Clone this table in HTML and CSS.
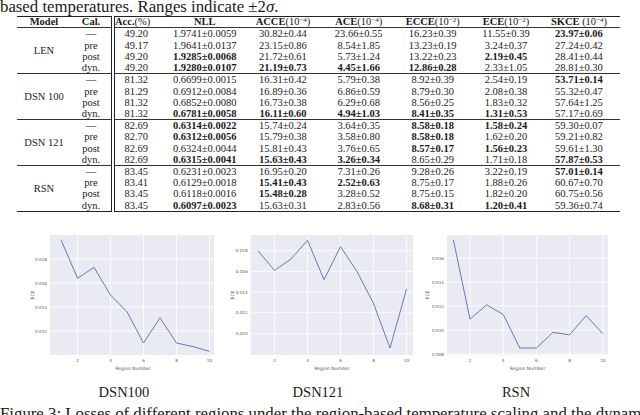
FILE: index.html
```html
<!DOCTYPE html>
<html>
<head>
<meta charset="utf-8">
<link rel="stylesheet" href="styles.css">
</head>
<body>
<p class="title">based temperatures. Ranges indicate ±2<i>σ</i>.</p>
<table class="res">
<colgroup>
<col class="c-model"><col class="c-cal"><col class="c-acc"><col class="c-nll"><col class="c-acce"><col class="c-ace"><col class="c-ecce"><col class="c-ece"><col class="c-skce">
</colgroup>
<thead>
<tr><th>Model</th><th class="cal">Cal.</th><th>Acc.<span class="reg">(%)</span></th><th>NLL</th><th>ACCE<span class="reg">(10<sup>−4</sup>)</span></th><th>ACE<span class="reg">(10<sup>−4</sup>)</span></th><th>ECCE<span class="reg">(10<sup>−2</sup>)</span></th><th>ECE<span class="reg">(10<sup>−2</sup>)</span></th><th>SKCE <span class="reg">(10<sup>−4</sup>)</span></th></tr>
</thead>
<tbody>
<tr><td rowspan="4">LEN</td><td class="cal">—</td><td>49.20</td><td>1.9741±0.0059</td><td>30.82±0.44</td><td>23.66±0.55</td><td>16.23±0.39</td><td>11.55±0.39</td><td><b>23.97±0.06</b></td></tr>
<tr><td class="cal">pre</td><td>49.17</td><td>1.9641±0.0137</td><td>23.15±0.86</td><td>8.54±1.85</td><td>13.23±0.19</td><td>3.24±0.37</td><td>27.24±0.42</td></tr>
<tr><td class="cal">post</td><td>49.20</td><td><b>1.9285±0.0068</b></td><td>21.72±0.61</td><td>5.73±1.24</td><td>13.22±0.23</td><td><b>2.19±0.45</b></td><td>28.41±0.44</td></tr>
<tr><td class="cal">dyn.</td><td>49.20</td><td><b>1.9280±0.0107</b></td><td><b>21.19±0.73</b></td><td><b>4.45±1.66</b></td><td><b>12.86±0.28</b></td><td>2.33±1.05</td><td>28.81±0.30</td></tr>
</tbody>
<tbody>
<tr><td rowspan="4">DSN 100</td><td class="cal">—</td><td>81.32</td><td>0.6699±0.0015</td><td>16.31±0.42</td><td>5.79±0.38</td><td>8.92±0.39</td><td>2.54±0.19</td><td><b>53.71±0.14</b></td></tr>
<tr><td class="cal">pre</td><td>81.29</td><td>0.6912±0.0084</td><td>16.89±0.36</td><td>6.86±0.59</td><td>8.79±0.30</td><td>2.08±0.38</td><td>55.32±0.47</td></tr>
<tr><td class="cal">post</td><td>81.32</td><td>0.6852±0.0080</td><td>16.73±0.38</td><td>6.29±0.68</td><td>8.56±0.25</td><td>1.83±0.32</td><td>57.64±1.25</td></tr>
<tr><td class="cal">dyn.</td><td>81.32</td><td><b>0.6781±0.0058</b></td><td><b>16.11±0.60</b></td><td><b>4.94±1.03</b></td><td><b>8.41±0.35</b></td><td><b>1.31±0.53</b></td><td>57.17±0.69</td></tr>
</tbody>
<tbody>
<tr><td rowspan="4">DSN 121</td><td class="cal">—</td><td>82.69</td><td><b>0.6314±0.0022</b></td><td>15.74±0.24</td><td>3.64±0.35</td><td><b>8.58±0.18</b></td><td><b>1.58±0.24</b></td><td>59.30±0.07</td></tr>
<tr><td class="cal">pre</td><td>82.70</td><td><b>0.6312±0.0056</b></td><td>15.79±0.38</td><td>3.58±0.80</td><td><b>8.58±0.18</b></td><td>1.62±0.20</td><td>59.21±0.82</td></tr>
<tr><td class="cal">post</td><td>82.69</td><td>0.6324±0.0044</td><td>15.81±0.43</td><td>3.76±0.65</td><td><b>8.57±0.17</b></td><td><b>1.56±0.23</b></td><td>59.61±1.30</td></tr>
<tr><td class="cal">dyn.</td><td>82.69</td><td><b>0.6315±0.0041</b></td><td><b>15.63±0.43</b></td><td><b>3.26±0.34</b></td><td>8.65±0.29</td><td>1.71±0.18</td><td><b>57.87±0.53</b></td></tr>
</tbody>
<tbody>
<tr><td rowspan="4">RSN</td><td class="cal">—</td><td>83.45</td><td>0.6231±0.0023</td><td>16.95±0.20</td><td>7.31±0.26</td><td>9.28±0.26</td><td>3.22±0.19</td><td><b>57.01±0.14</b></td></tr>
<tr><td class="cal">pre</td><td>83.41</td><td>0.6129±0.0018</td><td><b>15.41±0.43</b></td><td><b>2.52±0.63</b></td><td>8.75±0.17</td><td>1.88±0.26</td><td>60.67±0.70</td></tr>
<tr><td class="cal">post</td><td>83.45</td><td>0.6118±0.0016</td><td><b>15.48±0.28</b></td><td>3.28±0.52</td><td>8.75±0.15</td><td>1.82±0.20</td><td>60.75±0.56</td></tr>
<tr><td class="cal">dyn.</td><td>83.45</td><td><b>0.6097±0.0023</b></td><td>15.63±0.31</td><td>2.83±0.56</td><td><b>8.68±0.31</b></td><td><b>1.20±0.41</b></td><td>59.36±0.74</td></tr>
</tbody>
</table>

<div class="figs">
  <div class="fig">
    <svg class="plot" width="200" height="150" viewBox="0 0 200 150">
      <rect class="bg" x="36" y="10" width="166" height="120"/>
      <g class="grid">
        <line x1="63.5" y1="10" x2="63.5" y2="130"/><line x1="96.5" y1="10" x2="96.5" y2="130"/><line x1="129.5" y1="10" x2="129.5" y2="130"/><line x1="162.5" y1="10" x2="162.5" y2="130"/><line x1="195.5" y1="10" x2="195.5" y2="130"/>
        <line x1="36" y1="34" x2="202" y2="34"/><line x1="36" y1="58" x2="202" y2="58"/><line x1="36" y1="82" x2="202" y2="82"/><line x1="36" y1="106" x2="202" y2="106"/>
      </g>
      <polyline class="ln" points="47,14.8 63.5,53.2 80,42.4 96.5,70 113,86.8 129.5,118 146,92.8 162.5,118 179,121.6 195.5,126.4"/>
      <g class="yt"><text x="33" y="35.5">0.018</text><text x="33" y="59.5">0.016</text><text x="33" y="83.5">0.014</text><text x="33" y="107.5">0.012</text></g>
      <g class="xt"><text x="63.5" y="137">2</text><text x="96.5" y="137">4</text><text x="129.5" y="137">6</text><text x="162.5" y="137">8</text><text x="195.5" y="137">10</text></g>
      <text class="xl" x="119" y="144.5">Region Number</text>
      <text class="yl" transform="translate(19.5 70) rotate(-90)">ECE</text>
    </svg>
    <div class="sub sub1">DSN100</div>
  </div>
  <div class="fig">
    <svg class="plot" width="200" height="150" viewBox="0 0 200 150">
      <rect class="bg" x="36.7" y="10" width="162.3" height="120"/>
      <g class="grid">
        <line x1="60.5" y1="10" x2="60.5" y2="130"/><line x1="93.5" y1="10" x2="93.5" y2="130"/><line x1="126.5" y1="10" x2="126.5" y2="130"/><line x1="159.5" y1="10" x2="159.5" y2="130"/><line x1="192.5" y1="10" x2="192.5" y2="130"/>
        <line x1="36.7" y1="25.7" x2="199" y2="25.7"/><line x1="36.7" y1="46.4" x2="199" y2="46.4"/><line x1="36.7" y1="67.1" x2="199" y2="67.1"/><line x1="36.7" y1="87.8" x2="199" y2="87.8"/><line x1="36.7" y1="108.5" x2="199" y2="108.5"/>
      </g>
      <polyline class="ln" points="44,25.7 60.5,45.4 77,34 93.5,15.35 110,54.7 126.5,21.6 143,46.4 159.5,78.5 176,123 192.5,64"/>
      <g class="yt"><text x="33.7" y="27.2">0.018</text><text x="33.7" y="47.9">0.016</text><text x="33.7" y="68.6">0.014</text><text x="33.7" y="89.3">0.012</text><text x="33.7" y="110">0.010</text></g>
      <g class="xt"><text x="60.5" y="137">2</text><text x="93.5" y="137">4</text><text x="126.5" y="137">6</text><text x="159.5" y="137">8</text><text x="192.5" y="137">10</text></g>
      <text class="xl" x="118" y="144.5">Region Number</text>
      <text class="yl" transform="translate(19.5 70) rotate(-90)">ECE</text>
    </svg>
    <div class="sub sub2">DSN121</div>
  </div>
  <div class="fig">
    <svg class="plot" width="200" height="150" viewBox="0 0 200 150">
      <rect class="bg" x="33" y="10" width="161" height="120"/>
      <g class="grid">
        <line x1="56" y1="10" x2="56" y2="130"/><line x1="89.2" y1="10" x2="89.2" y2="130"/><line x1="122.4" y1="10" x2="122.4" y2="130"/><line x1="155.6" y1="10" x2="155.6" y2="130"/><line x1="188.8" y1="10" x2="188.8" y2="130"/>
        <line x1="33" y1="33" x2="194" y2="33"/><line x1="33" y1="57" x2="194" y2="57"/><line x1="33" y1="81" x2="194" y2="81"/><line x1="33" y1="105" x2="194" y2="105"/><line x1="33" y1="129" x2="194" y2="129"/>
      </g>
      <polyline class="ln" points="39.4,15 56,94.2 72.6,79.8 89.2,89.4 105.8,123 122.4,123 139,107.4 155.6,109.8 172.2,90.6 188.8,108.6"/>
      <g class="yt"><text x="30" y="34.5">0.016</text><text x="30" y="58.5">0.014</text><text x="30" y="82.5">0.012</text><text x="30" y="106.5">0.010</text><text x="30" y="130.5">0.008</text></g>
      <g class="xt"><text x="56" y="137">2</text><text x="89.2" y="137">4</text><text x="122.4" y="137">6</text><text x="155.6" y="137">8</text><text x="188.8" y="137">10</text></g>
      <text class="xl" x="113.5" y="144.5">Region Number</text>
      <text class="yl" transform="translate(14.5 70) rotate(-90)">ECE</text>
    </svg>
    <div class="sub sub3">RSN</div>
  </div>
</div>
<p class="caption">Figure 3: Losses of different regions under the region-based temperature scaling and the dynamic calibration of</p>
</body>
</html>
```

FILE: styles.css
```css
html, body {
  margin: 0;
  padding: 0;
  background: #ffffff;
}
body {
  width: 640px;
  height: 415px;
  overflow: hidden;
  font-family: "Liberation Serif", "Times New Roman", serif;
  color: #1a1a1a;
}
.title {
  margin: 0;
  font-family: "Liberation Serif", "Times New Roman", serif;
  font-size: 16.8px;
  line-height: 13.6px;
  white-space: nowrap;
}
.res {
  margin: 2.9px 0 0 17px;
  width: 603px;
  table-layout: fixed;
  border-collapse: collapse;
  border-top: 1.5px solid #222;
  border-bottom: 1.5px solid #222;
  font-family: "Liberation Serif", "Times New Roman", serif;
  font-size: 10.5px;
}
.c-model { width: 54px; }
.c-cal { width: 42px; }
.c-acc { width: 40px; }
.c-nll { width: 91.5px; }
.c-acce { width: 77px; }
.c-ace { width: 74.5px; }
.c-ecce { width: 73.5px; }
.c-ece { width: 73px; }
.c-skce { width: 77.5px; }
.res th {
  padding: 0;
  height: 10px;
  line-height: 10px;
  font-family: "Liberation Serif", "Times New Roman", serif;
  font-weight: bold;
  text-align: center;
  white-space: nowrap;
  border-bottom: 1px solid #333;
}
.res th .reg { font-weight: normal; }
.res sup {
  font-size: 7px;
  line-height: 0;
  vertical-align: 3px;
}
.res td {
  padding: 0;
  height: 11.2px;
  line-height: 11.2px;
  font-family: "Liberation Serif", "Times New Roman", serif;
  text-align: center;
  white-space: nowrap;
  vertical-align: middle;
}
.res tbody + tbody tr:first-child td {
  border-top: 1px solid #333;
}
.res .cal {
  border-right: 4px double #222;
}
.res td:nth-last-child(7), .res th:nth-child(3) {
  text-align: right;
  padding-right: 5px;
}
.res td:nth-last-child(6), .res th:nth-child(4) {
  padding-left: 12px;
}
.res td:last-child, .res th:last-child {
  padding-right: 4.5px;
}
.figs {
  display: flex;
  padding-left: 14px;
  margin-top: 13px;
}
.fig {
  width: 200px;
  flex: none;
}
.plot {
  display: block;
}
.bg { fill: #eaeaf2; }
.grid line {
  stroke: #ffffff;
  stroke-width: 0.8;
}
.ln {
  fill: none;
  stroke: #4c72b0;
  stroke-width: 0.9;
  stroke-linejoin: round;
}
.yt text {
  font-family: "DejaVu Sans", sans-serif;
  font-size: 4.2px;
  fill: #555;
  text-anchor: end;
}
.xt text {
  font-family: "DejaVu Sans", sans-serif;
  font-size: 4.2px;
  fill: #555;
  text-anchor: middle;
}
.xl, .yl {
  font-family: "DejaVu Sans", sans-serif;
  font-size: 4.6px;
  fill: #555;
  text-anchor: middle;
}
.sub {
  margin-top: 9px;
  font-family: "Liberation Serif", "Times New Roman", serif;
  font-size: 14.5px;
  line-height: 17px;
  text-align: center;
}
.sub1 { padding-left: 20px; }
.sub2 { padding-left: 8px; }
.sub3 { padding-left: 4px; }
.caption {
  margin: 4.3px 0 0 0;
  width: 640px;
  overflow: hidden;
  font-family: "Liberation Serif", "Times New Roman", serif;
  font-size: 16.8px;
  line-height: 17px;
  white-space: nowrap;
}
```
